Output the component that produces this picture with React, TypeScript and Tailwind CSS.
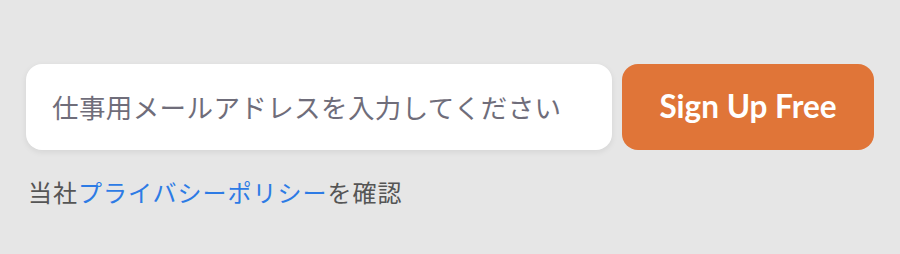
export default function App() {
  return (
    <div className="w-[900px] h-[254px] bg-[#e6e6e6] pt-[64px] pl-[26px] font-['Noto_Sans_CJK_JP','Noto_Sans',sans-serif]">
      {/* Signup row */}
      <div className="flex gap-[10px]">
        <div className="w-[586px] h-[86px] bg-white rounded-[16px] shadow-[0_2px_6px_rgba(0,0,0,0.08)] flex items-center pl-[26px]">
          <input
            placeholder="仕事用メールアドレスを入力してください"
            className="w-full bg-transparent outline-none text-[26.5px] tracking-[0.4px] text-[#333] placeholder:text-[#6f6d7a]"
          />
        </div>
        <button className="w-[252px] h-[86px] rounded-[16px] bg-[#e07538] text-white text-[31.5px] font-bold font-['Lato',sans-serif]">
          Sign Up Free
        </button>
      </div>

      {/* Privacy note */}
      <p className="mt-[26px] ml-[2px] text-[24px] leading-[32px] tracking-[1px] text-[#555]">
        当社<a href="#" className="text-[#2d7be5]">プライバシーポリシー</a>を確認
      </p>
    </div>
  )
}
